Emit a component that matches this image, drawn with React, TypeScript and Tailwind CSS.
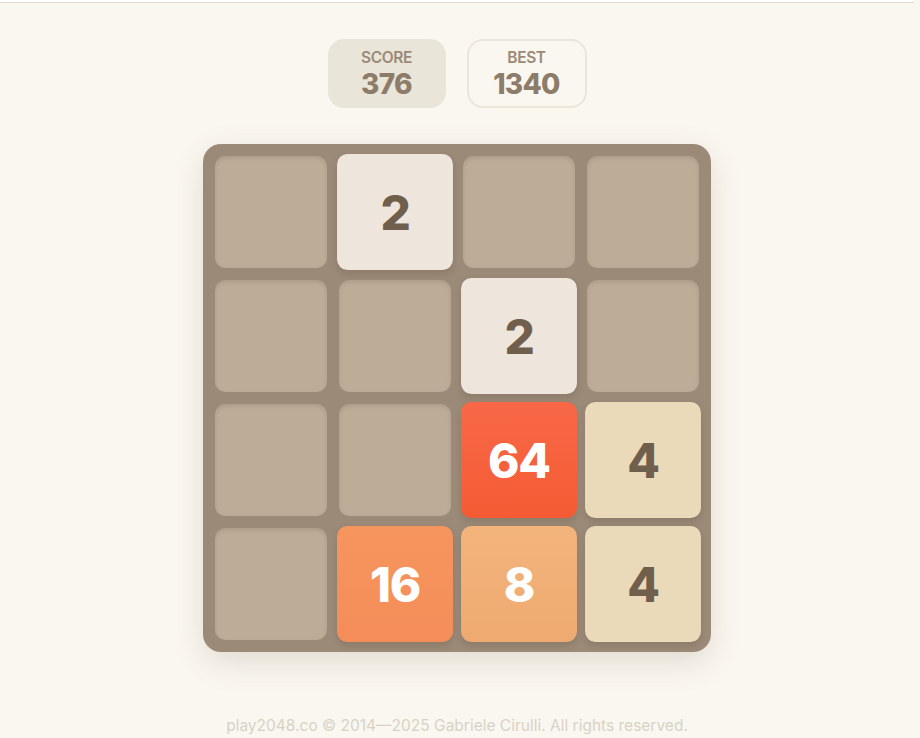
type Tile = { value: number } | null

const board: Tile[][] = [
  [null, { value: 2 }, null, null],
  [null, null, { value: 2 }, null],
  [null, null, { value: 64 }, { value: 4 }],
  [null, { value: 16 }, { value: 8 }, { value: 4 }],
]

// tile look per value
const tileStyles: Record<number, string> = {
  2: 'bg-[#eee5dc] text-[#715f4d]',
  4: 'bg-[#ebdab9] text-[#715f4d]',
  8: 'bg-gradient-to-b from-[#f3b47c] to-[#eeaa70] text-white',
  16: 'bg-gradient-to-b from-[#f7955e] to-[#f48d59] text-white',
  64: 'bg-gradient-to-b from-[#f86846] to-[#f45b34] text-white',
}

function ScoreBox({ label, value, filled }: { label: string; value: number; filled?: boolean }) {
  return (
    <div
      className={
        filled
          ? 'w-[118px] h-[69px] rounded-2xl bg-[#e9e5d8] flex flex-col items-center justify-center'
          : 'w-[120px] h-[69px] rounded-2xl border-2 border-[#ebe6da] flex flex-col items-center justify-center'
      }
    >
      <span className="text-[15.5px] leading-5 font-semibold text-[#9b8a78] tracking-tight">{label}</span>
      <span className="text-[28px] leading-8 font-extrabold text-[#8e7c6a] tracking-tight">
        {value}
      </span>
    </div>
  )
}

function Cell({ tile }: { tile: Tile }) {
  if (!tile) {
    return (
      <div className="w-[112px] h-[112px] rounded-[10px] bg-[#bdad98] shadow-[inset_0_2px_4px_rgba(120,100,80,0.25)]" />
    )
  }
  return (
    <div
      className={`w-[112px] h-[112px] rounded-[10px] scale-[1.035] flex items-center justify-center shadow-[0_3px_6px_rgba(80,60,40,0.18)] ${tileStyles[tile.value]}`}
    >
      <span className="text-[46px] font-extrabold tracking-tight">{tile.value}</span>
    </div>
  )
}

export default function App() {
  return (
    <div
      className="min-h-screen bg-[#faf7f0] flex flex-col items-center pr-[6px]"
      style={{ fontFamily: 'Inter, "Noto Sans", sans-serif' }}
    >
      <div className="w-full h-[2px] bg-white" />
      <div className="w-full h-px bg-[#dcdad5]" />
      <div className="flex gap-[21px] mt-[36px]">
        <ScoreBox label="SCORE" value={376} filled />
        <ScoreBox label="BEST" value={1340} />
      </div>
      <div className="mt-[36px] w-[508px] h-[508px] rounded-[18px] bg-[#9c8a79] p-3 grid grid-cols-4 gap-3 shadow-[0_10px_30px_rgba(120,100,70,0.18)]">
        {board.flat().map((tile, i) => (
          <Cell key={i} tile={tile} />
        ))}
      </div>
      <p className="mt-[64px] text-[15.5px] leading-5 text-[#d8d2c6]">
        play2048.co © 2014—2025 Gabriele Cirulli. All rights reserved.
      </p>
    </div>
  )
}
